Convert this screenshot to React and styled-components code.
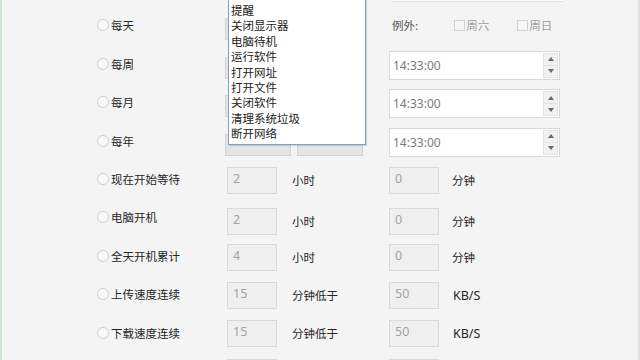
import React from "react";
import styled, { createGlobalStyle } from "styled-components";

const Global = createGlobalStyle`
  html, body { margin: 0; padding: 0; background: #f4f4f4; }
  body { font-family: "Noto Sans CJK SC", "Noto Sans", sans-serif; }
`;

const Page = styled.div`
  position: relative;
  width: 640px;
  height: 360px;
  box-sizing: border-box;
  overflow: hidden;
  background: #f4f4f4;
  border-left: 2px solid #cfe2d2;
  border-right: 2px solid #dfe3da;
  padding: 6px 0 0 95px;
`;

const TopStrip = styled.div`
  position: absolute;
  left: 389px;
  top: -2px;
  width: 171px;
  height: 3px;
  border-bottom: 1px solid #dcdcdc;
  background: #fff;
`;

const Row = styled.div`
  display: grid;
  grid-template-columns: 130px 65px 97px 63px 120px;
  align-items: center;
  height: 38.5px;
`;

const RadioLabel = styled.label`
  display: flex;
  align-items: center;
  gap: 2px;
  font-size: 11.5px;
  color: #262626;
  margin-top: ${(p) => (p.$lift ? "-1px" : "0")};
`;

const RadioDot = styled.span`
  width: 12px;
  height: 12px;
  border-radius: 50%;
  border: 1px solid #d0d0d0;
  background: #f9f9f9;
  box-sizing: border-box;
`;

const ComboPair = styled.div`
  grid-column: 2 / 4;
  display: flex;
  gap: 6px;
  margin-left: -2px;
`;

const Combo = styled.div`
  width: 66px;
  height: 22px;
  box-sizing: border-box;
  background: #e4e4e4;
  border: 1px solid #d4d4d4;
  margin-top: 8px;
`;

const TimeBox = styled.div`
  grid-column: 4 / 6;
  width: 171px;
  height: 29px;
  box-sizing: border-box;
  background: #fff;
  border: 1px solid #d8d8d8;
  display: flex;
  align-items: center;
  justify-content: space-between;
  padding-left: 3px;
  margin-top: 3px;
  font-family: "Noto Sans", sans-serif;
  font-size: 12px;
  color: #7a7a7a;
`;

const Spin = styled.div`
  display: flex;
  flex-direction: column;
  width: 15px;
  height: 25px;
  margin-right: 1px;
  border: 1px solid #e2e2e2;
  box-sizing: border-box;
  background: #f1f1f1;
`;

const SpinHalf = styled.div`
  flex: 1;
  display: flex;
  align-items: center;
  justify-content: center;
  border-top: ${(p) => (p.$bottom ? "1px solid #e2e2e2" : "none")};
  svg { display: block; }
`;

const Exceptions = styled.div`
  grid-column: 4 / 6;
  display: flex;
  align-items: center;
  padding-left: 3px;
  font-size: 11.5px;
  color: #555;
`;

const CheckItem = styled.span`
  display: flex;
  align-items: center;
  gap: 1px;
  color: #a0a0a0;
  margin-left: ${(p) => p.$ml}px;
`;

const CheckBox = styled.span`
  width: 11px;
  height: 11px;
  box-sizing: border-box;
  border: 1px solid #d2d2d2;
  background: #f6f6f6;
`;

const NumBox = styled.div`
  width: 50px;
  height: 27px;
  box-sizing: border-box;
  background: #efefef;
  border: 1px solid #d9d9d9;
  padding: 3px 5px;
  font-family: "Noto Sans", sans-serif;
  font-size: 12.5px;
  line-height: 16px;
  color: #a3a3a3;
  margin-top: ${(p) => p.$mt || 0}px;
`;

const Unit = styled.span`
  color: #262626;
  font-family: ${(p) => (p.$latin ? '"Noto Sans", sans-serif' : "inherit")};
  font-size: ${(p) => (p.$latin ? "12.5px" : "11.5px")};
  padding-left: ${(p) => (p.$latin ? 1 : 0)}px;
  margin-top: ${(p) => p.$mt || 0}px;
`;

const DropList = styled.ul`
  position: absolute;
  left: 226px;
  top: -1px;
  width: 138px;
  margin: 0;
  padding: 3px 0 2px 2px;
  box-sizing: border-box;
  list-style: none;
  background: #fff;
  border: 1px solid #7f9fc6;
  box-shadow: 1px 1px 1px rgba(0, 0, 0, 0.12);
  font-size: 11.5px;
  color: #222;
`;

const DropItem = styled.li`
  height: 15.4px;
  line-height: 15.4px;
  white-space: nowrap;
`;

const Arrow = ({ up }) => (
  <svg width="6" height="4" viewBox="0 0 6 4">
    <path d={up ? "M0 4 L3 0 L6 4 Z" : "M0 0 L3 4 L6 0 Z"} fill="#6a6a6a" />
  </svg>
);

const Radio = ({ children, lift }) => (
  <RadioLabel $lift={lift}>
    <RadioDot />
    {children}
  </RadioLabel>
);

const TimeSpin = ({ value }) => (
  <TimeBox>
    {value}
    <Spin>
      <SpinHalf>
        <Arrow up />
      </SpinHalf>
      <SpinHalf $bottom>
        <Arrow />
      </SpinHalf>
    </Spin>
  </TimeBox>
);

const dropItems = ["提醒", "关闭显示器", "电脑待机", "运行软件", "打开网址", "打开文件", "关闭软件", "清理系统垃圾", "断开网络"];

const lowerRows = [
  { label: "现在开始等待", a: "2", ua: "小时", b: "0", ub: "分钟", mt: 3, umt: 2 },
  { label: "电脑开机", a: "2", ua: "小时", b: "0", ub: "分钟", mt: 7, umt: 6 },
  { label: "全天开机累计", a: "4", ua: "小时", b: "0", ub: "分钟", mt: 3, umt: 1 },
  { label: "上传速度连续", a: "15", ua: "分钟低于", b: "50", ub: "KB/S", mt: 1, umt: 1, latin: true },
  { label: "下载速度连续", a: "15", ua: "分钟低于", b: "50", ub: "KB/S", mt: 1, umt: 0, latin: true },
  { label: "", a: "", ua: "", b: "", ub: "", mt: 1, umt: 0 },
];

export default function App() {
  return (
    <>
      <Global />
      <Page>
        <TopStrip />
        <Row>
          <Radio>每天</Radio>
          <ComboPair>
            <Combo />
            <Combo />
          </ComboPair>
          <Exceptions>
            例外:
            <CheckItem $ml={36}>
              <CheckBox />
              周六
            </CheckItem>
            <CheckItem $ml={28}>
              <CheckBox />
              周日
            </CheckItem>
          </Exceptions>
        </Row>
        {["每周", "每月", "每年"].map((l) => (
          <Row key={l}>
            <Radio>{l}</Radio>
            <ComboPair>
              <Combo />
              <Combo />
            </ComboPair>
            <TimeSpin value="14:33:00" />
          </Row>
        ))}
        {lowerRows.map((r, i) => (
          <Row key={i}>
            {r.label ? <Radio lift>{r.label}</Radio> : <span />}
            <NumBox $mt={r.mt}>{r.a}</NumBox>
            <Unit $mt={r.umt}>{r.ua}</Unit>
            <NumBox $mt={r.mt}>{r.b}</NumBox>
            <Unit $latin={r.latin} $mt={r.umt}>
              {r.ub}
            </Unit>
          </Row>
        ))}
        <DropList>
          {dropItems.map((d) => (
            <DropItem key={d}>{d}</DropItem>
          ))}
        </DropList>
      </Page>
    </>
  );
}
